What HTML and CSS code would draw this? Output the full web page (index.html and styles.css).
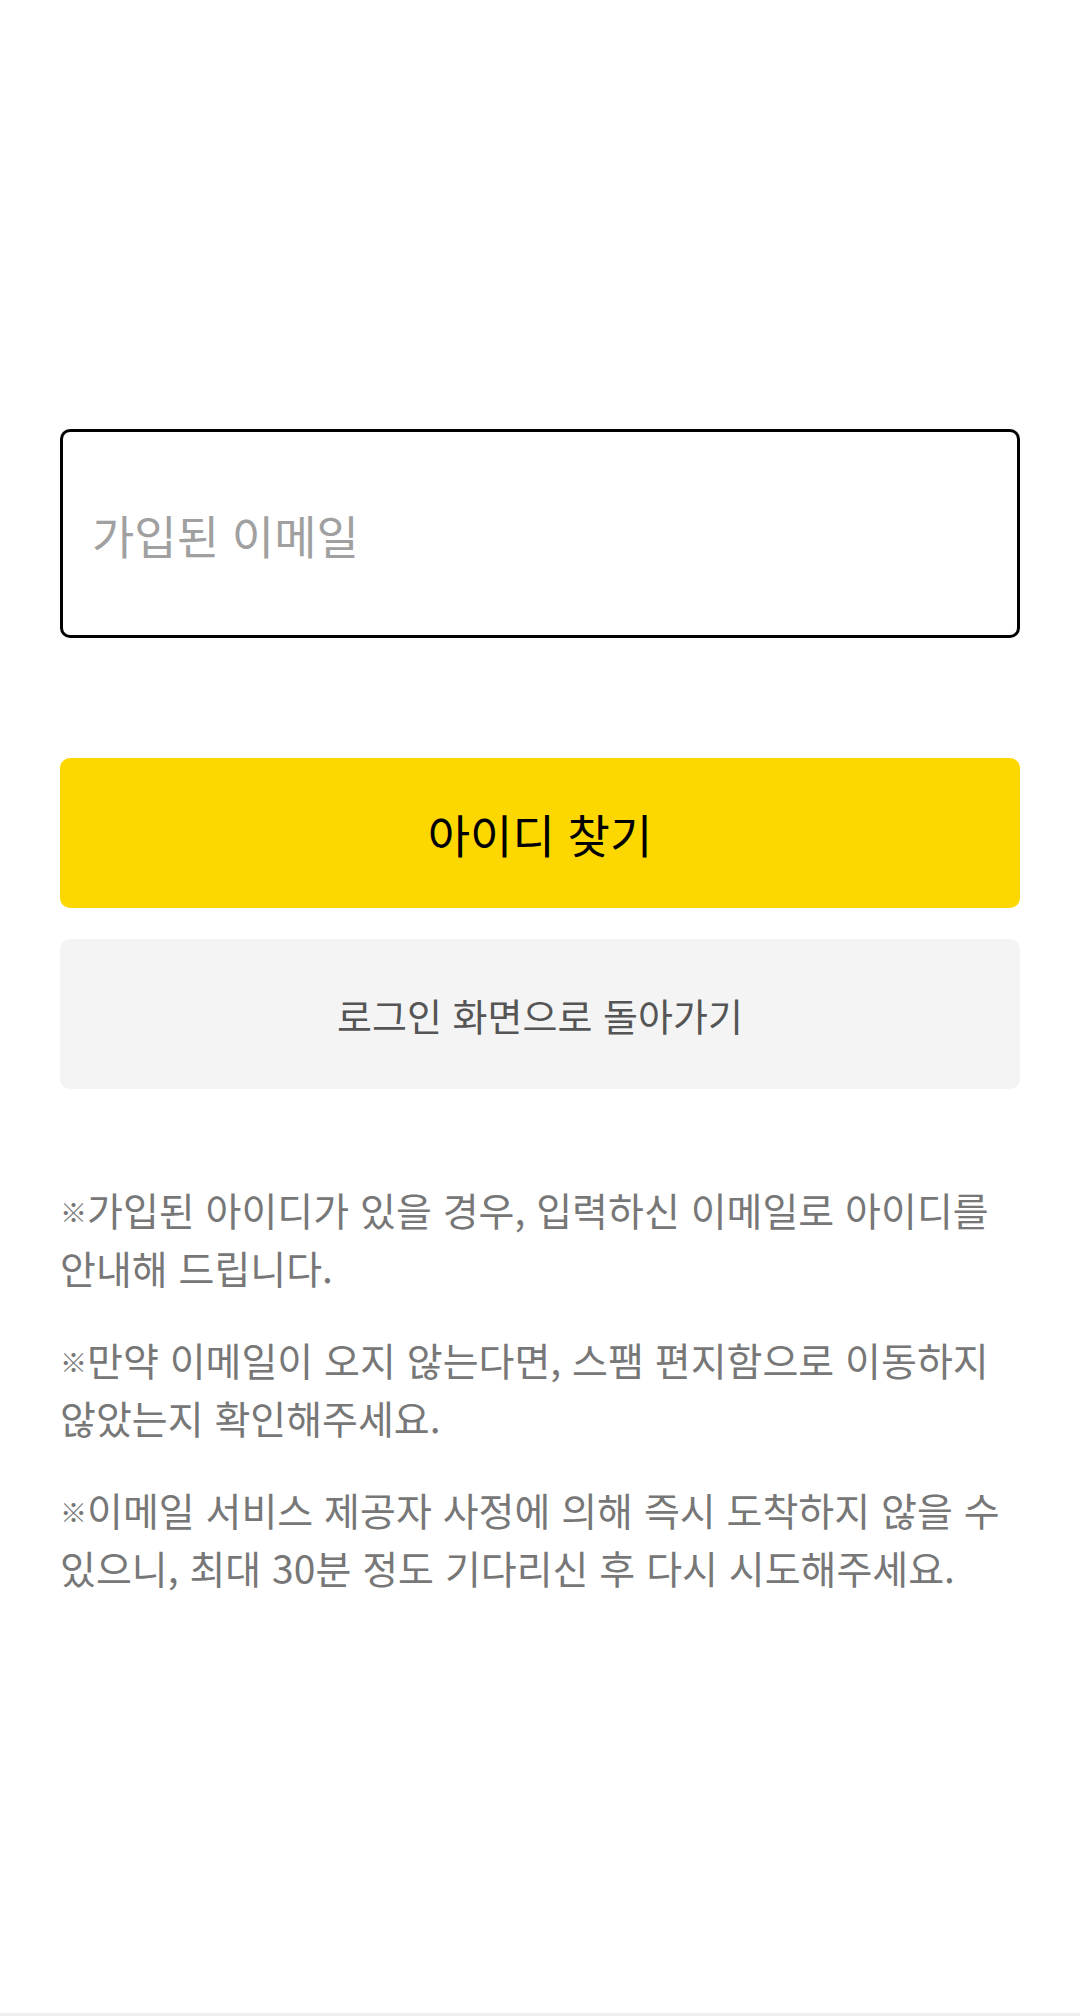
FILE: index.html
```html
<!DOCTYPE html>
<html lang="ko">
<head>
<meta charset="utf-8">
<link rel="stylesheet" href="styles.css">
</head>
<body>
<main class="page">
  <div class="field"><span class="placeholder">가입된 이메일</span></div>
  <button class="btn btn-primary">아이디 찾기</button>
  <button class="btn btn-secondary">로그인 화면으로 돌아가기</button>
  <div class="notes">
    <p><span class="mark">※</span>가입된 아이디가 있을 경우, 입력하신 이메일로 아이디를 안내해 드립니다.</p>
    <p><span class="mark">※</span>만약 이메일이 오지 않는다면, 스팸 편지함으로 이동하지 않았는지 확인해주세요.</p>
    <p><span class="mark">※</span>이메일 서비스 제공자 사정에 의해 즉시 도착하지 않을 수 있으니, 최대 30분 정도 기다리신 후 다시 시도해주세요.</p>
  </div>
</main>
<div class="navbar-edge"></div>
</body>
</html>
```
FILE: styles.css
```css
html, body {
  margin: 0;
  padding: 0;
  background: #ffffff;
  font-family: "Noto Sans CJK KR", "Noto Sans", sans-serif;
}
body {
  width: 1080px;
  height: 2016px;
  position: relative;
  overflow: hidden;
}
.page {
  padding: 429px 60px 0;
  display: flex;
  flex-direction: column;
}
.field {
  box-sizing: border-box;
  height: 209px;
  border: 3px solid #000;
  border-radius: 10px;
  display: flex;
  align-items: center;
  padding-left: 29px;
}
.placeholder {
  font-size: 46px;
  color: #a0a0a0;
}
.btn {
  box-sizing: border-box;
  height: 150px;
  border: none;
  border-radius: 10px;
  font-family: inherit;
  display: flex;
  align-items: center;
  justify-content: center;
  padding: 0;
}
.btn-primary {
  margin-top: 120px;
  background: #fdd700;
  color: #000;
  font-size: 46px;
}
.btn-secondary {
  margin-top: 31px;
  background: #f4f4f4;
  color: #555555;
  font-size: 38px;
}
.notes {
  margin-top: 91px;
  color: #777777;
  font-size: 39px;
  line-height: 58px;
  word-break: keep-all;
}
.notes p {
  margin: 0 0 34px;
}
.mark {
  display: inline-block;
  font-size: 27px;
  line-height: 27px;
  vertical-align: 3px;
}
.navbar-edge {
  position: absolute;
  left: 0;
  right: 0;
  bottom: 0;
  height: 3px;
  background: #efefef;
}
```
